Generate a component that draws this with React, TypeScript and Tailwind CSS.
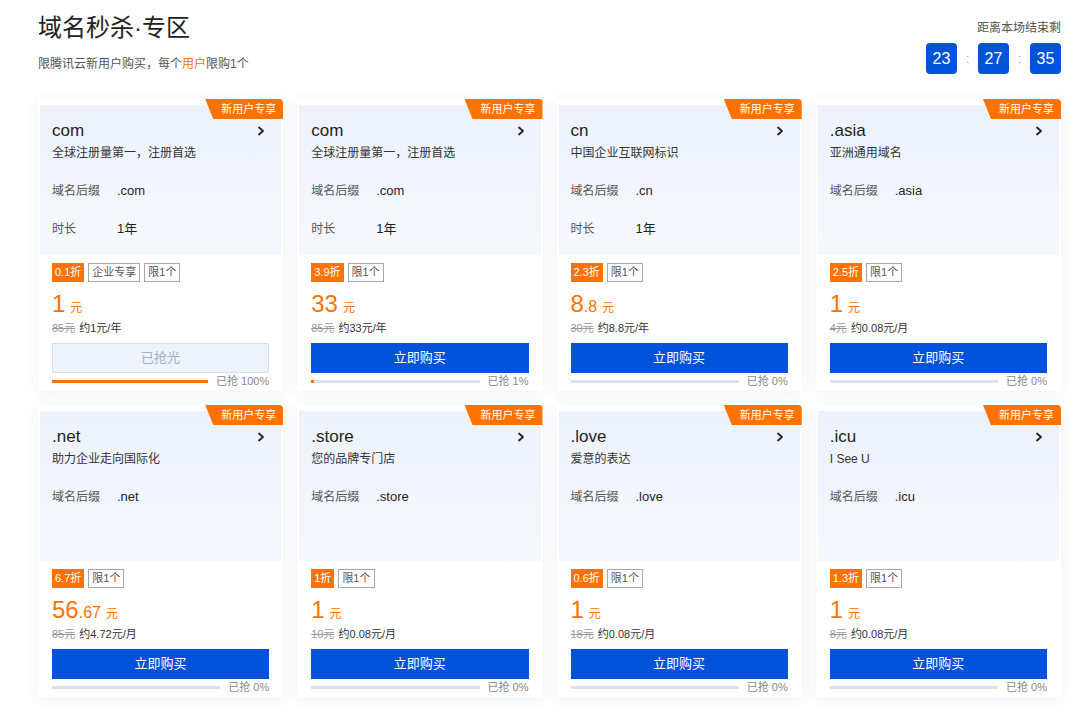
import { type FC } from "react";

type Deal = {
	name: string;
	desc: string;
	suffix: string;
	duration?: string;
	discount: string;
	enterprise?: boolean;
	price: string;
	decimal?: string;
	original: string;
	unit: string;
	percent: number;
	soldOut?: boolean;
};

const deals: Deal[] = [
	{ name: "com", desc: "全球注册量第一，注册首选", suffix: ".com", duration: "1年", discount: "0.1折", enterprise: true, price: "1", original: "85元", unit: "约1元/年", percent: 100, soldOut: true },
	{ name: "com", desc: "全球注册量第一，注册首选", suffix: ".com", duration: "1年", discount: "3.9折", price: "33", original: "85元", unit: "约33元/年", percent: 1 },
	{ name: "cn", desc: "中国企业互联网标识", suffix: ".cn", duration: "1年", discount: "2.3折", price: "8", decimal: ".8", original: "30元", unit: "约8.8元/年", percent: 0 },
	{ name: ".asia", desc: "亚洲通用域名", suffix: ".asia", discount: "2.5折", price: "1", original: "4元", unit: "约0.08元/月", percent: 0 },
	{ name: ".net", desc: "助力企业走向国际化", suffix: ".net", discount: "6.7折", price: "56", decimal: ".67", original: "85元", unit: "约4.72元/月", percent: 0 },
	{ name: ".store", desc: "您的品牌专门店", suffix: ".store", discount: "1折", price: "1", original: "10元", unit: "约0.08元/月", percent: 0 },
	{ name: ".love", desc: "爱意的表达", suffix: ".love", discount: "0.6折", price: "1", original: "18元", unit: "约0.08元/月", percent: 0 },
	{ name: ".icu", desc: "I See U", suffix: ".icu", discount: "1.3折", price: "1", original: "8元", unit: "约0.08元/月", percent: 0 },
];

const Chevron: FC = () => (
	<svg width="10" height="10" viewBox="0 0 10 10" fill="none" aria-hidden="true">
		<polyline points="3,1.5 7,5 3,8.5" stroke="#222" strokeWidth="1.8" strokeLinecap="round" strokeLinejoin="round" />
	</svg>
);

const DealCard: FC<{ deal: Deal }> = ({ deal }) => (
	<div className="relative flex flex-col bg-white px-[2px] pt-[6px] pb-[3px] shadow-[0_2px_14px_rgba(30,60,120,0.07)]">
		<div className="top-0 right-0 absolute flex items-center bg-[#ff7200] [clip-path:polygon(0_0,100%_0,100%_100%,8px_100%)] pr-[7px] pl-[16px] rounded-tr-[4px] h-[20px] text-[11px] text-white leading-[20px]">
			新用户专享
		</div>
		<div className="flex flex-col bg-gradient-to-b from-[#ecf1fb] to-[#f6f8fe] pt-[16px] pr-[15px] pl-[12px] h-[150px]">
			<div className="flex justify-between items-center h-[20px]">
				<span className="text-[#1f1f1f] text-[17px] leading-[20px]">{deal.name}</span>
				<Chevron />
			</div>
			<div className="mt-[3px] h-[18px] text-[#333] text-[12px] leading-[18px]">{deal.desc}</div>
			<div className="flex items-center mt-[20px] h-[18px] leading-[18px]">
				<span className="w-[65px] text-[#555] text-[12px]">域名后缀</span>
				<span className="text-[#1f1f1f] text-[13px]">{deal.suffix}</span>
			</div>
			{deal.duration && (
				<div className="flex items-center mt-[20px] h-[18px] leading-[18px]">
					<span className="w-[65px] text-[#555] text-[12px]">时长</span>
					<span className="text-[#1f1f1f] text-[13px]">{deal.duration}</span>
				</div>
			)}
		</div>
		<div className="flex flex-col px-[12px]">
			<div className="flex items-center gap-[4px] mt-[8px] h-[19px]">
				<span className="bg-[#ff7200] px-[3px] h-[19px] text-[11px] text-white leading-[19px]">{deal.discount}</span>
				{deal.enterprise && (
					<span className="px-[3px] border border-[#a8a8a8] h-[19px] text-[#555] text-[11px] leading-[17px]">企业专享</span>
				)}
				<span className="px-[3px] border border-[#a8a8a8] h-[19px] text-[#555] text-[11px] leading-[17px]">限1个</span>
			</div>
			<div className="flex items-baseline mt-[7px] h-[30px] text-[#ff7200] leading-[30px]">
				<span className="text-[24px]">{deal.price}</span>
				{deal.decimal && <span className="text-[16px]">{deal.decimal}</span>}
				<span className="ml-[5px] text-[12px]">元</span>
			</div>
			<div className="flex items-center gap-[4px] mt-[1px] h-[16px] text-[11px] leading-[16px]">
				<span className="text-[#999] line-through">{deal.original}</span>
				<span className="text-[#333]">{deal.unit}</span>
			</div>
			{deal.soldOut ? (
				<div className="flex justify-center items-center bg-[#edf2fc] mt-[7px] border border-[#d6dff0] h-[30px] text-[#a3aec4] text-[13px]">
					已抢光
				</div>
			) : (
				<div className="flex justify-center items-center bg-[#0052d9] mt-[7px] h-[30px] text-[13px] text-white">
					立即购买
				</div>
			)}
			<div className="flex items-center gap-[8px] mt-[1px] h-[14px]">
				<div className="flex-1 bg-[#dbe2ee] h-[3px]">
					<div
						className="bg-[#ff7200] h-full"
						style={{ width: `${deal.percent === 1 ? 1.5 : deal.percent}%` }}
					/>
				</div>
				<span className="text-[#888] text-[11px] leading-[14px]">已抢 {deal.percent}%</span>
			</div>
		</div>
	</div>
);

const TimeBox: FC<{ value: string }> = ({ value }) => (
	<div className="flex justify-center items-center bg-[#0052d9] rounded-[4px] w-[31px] h-[31px] text-[16px] text-white">
		{value}
	</div>
);

const App: FC = () => {
	return (
		<div
			className="bg-white pt-[12px] pr-[19px] pb-[20px] pl-[38px] w-full min-h-screen"
			style={{ fontFamily: '"Liberation Sans", "Noto Sans CJK SC", sans-serif' }}
		>
			<div className="flex justify-between items-start">
				<div className="flex flex-col">
					<h1 className="h-[32px] font-normal text-[#222] text-[24px] leading-[32px]">域名秒杀·专区</h1>
					<p className="mt-[11px] h-[18px] text-[#555] text-[12px] leading-[18px]">
						限腾讯云新用户购买，每个<span className="text-[#ff7200]">用户</span>限购1个
					</p>
				</div>
				<div className="flex flex-col items-end">
					<span className="mt-[7px] h-[18px] text-[#555] text-[12px] leading-[18px]">距离本场结束剩</span>
					<div className="flex items-center mt-[6px]">
						<TimeBox value="23" />
						<span className="w-[21px] text-[#aaa] text-[13px] text-center">:</span>
						<TimeBox value="27" />
						<span className="w-[21px] text-[#aaa] text-[13px] text-center">:</span>
						<TimeBox value="35" />
					</div>
				</div>
			</div>
			<div className="gap-[14px] grid grid-cols-4 mt-[25px]">
				{deals.map((deal, i) => (
					<DealCard key={i} deal={deal} />
				))}
			</div>
		</div>
	);
};

export default App;
